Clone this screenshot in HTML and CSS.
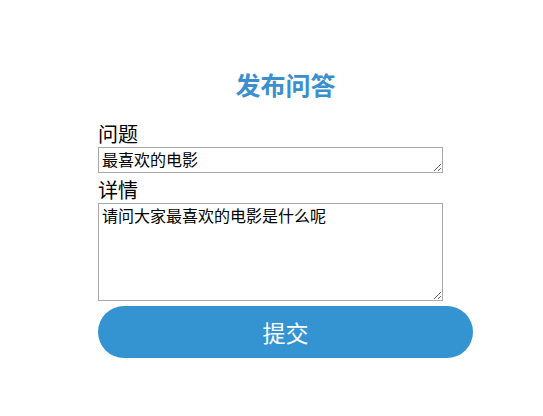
FILE: index.html
```html
<!DOCTYPE html>
<html lang="zh-CN">
<head>
    <meta charset="UTF-8">
    <meta name="viewport" content="width=device-width, initial-scale=1.0">
    <title>发布问答</title>
    <link rel="stylesheet" href="styles.css">
</head>
<body>
    <div class="container">
        <h2>发布问答</h2>
        <form id="askForm">
            <label for="title">问题</label>
            <textarea id="title" name="title" class="short">最喜欢的电影</textarea>
            <label for="detail">详情</label>
            <textarea id="detail" name="detail" class="long">请问大家最喜欢的电影是什么呢</textarea>
            <button type="button">提交</button>
        </form>
    </div>
</body>
</html>
```

FILE: styles.css
```css
body {
    font-family: "Liberation Sans", "Noto Sans CJK SC", sans-serif;
    background-color: #fff;
    margin: 0;
    padding: 0;
}
.container {
    width: 375px;
    padding: 70px 0 0 98px;
}
h2 {
    margin: 0 0 21px;
    font-size: 25px;
    line-height: 32px;
    text-align: center;
    color: #3a8fcc;
}
label {
    display: block;
    font-size: 20px;
    line-height: 24px;
    color: #000;
}
textarea {
    display: block;
    width: 345px;
    padding: 3px 3px 1px;
    border: 1px solid #a9a9a9;
    font-family: "Liberation Sans", "Noto Sans CJK SC", sans-serif;
    font-size: 16px;
    line-height: 20px;
    color: #000;
    box-sizing: border-box;
    margin: 0;
}
textarea.short {
    height: 26px;
    margin-bottom: 6px;
}
textarea.long {
    height: 98px;
    margin-bottom: 5px;
}
button {
    display: block;
    width: 375px;
    height: 52px;
    border: none;
    border-radius: 26px;
    background-color: #3494d2;
    color: #fff;
    font-family: "Liberation Sans", "Noto Sans CJK SC", sans-serif;
    font-size: 23px;
    cursor: pointer;
}
```
